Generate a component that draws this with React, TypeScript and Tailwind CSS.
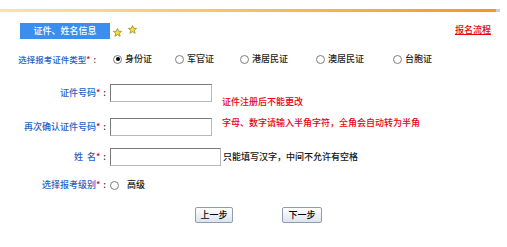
import React from "react";

const Star = () => (
  <svg width="9" height="9" viewBox="0 0 10 10">
    <polygon
      points="5,0.6 6.3,3.6 9.5,3.8 7,5.9 7.9,9.2 5,7.4 2.1,9.2 3,5.9 0.5,3.8 3.7,3.6"
      fill="#f7e03a"
      stroke="#9a8a2a"
      strokeWidth="0.9"
      strokeLinejoin="round"
    />
  </svg>
);

const Radio = ({ checked = false }: { checked?: boolean }) => (
  <span className="flex h-[9px] w-[9px] shrink-0 items-center justify-center rounded-full border border-[#7d7d7d] bg-white">
    {checked && <span className="h-[4px] w-[4px] rounded-full bg-black" />}
  </span>
);

const Label = ({ text, w }: { text: string; w: string }) => (
  <div className={`${w} shrink-0 text-right whitespace-pre`}>
    <span className="text-[#1f5fc8]">{text}</span>
    <span className="text-[#e60012]">*</span>
    <span className="ml-[3px] text-[#333]">:</span>
  </div>
);

export default function App() {
  const opts = [
    { t: "身份证", w: "w-[62px]", c: true },
    { t: "军官证", w: "w-[65px]", c: false },
    { t: "港居民证", w: "w-[76px]", c: false },
    { t: "澳居民证", w: "w-[77px]", c: false },
    { t: "台胞证", w: "w-[50px]", c: false },
  ];
  return (
    <div className="h-[247px] w-[507px] overflow-hidden bg-white font-['Noto_Sans_CJK_SC','Noto_Sans',sans-serif] text-[9px] font-medium leading-[10px]">
      <div className="pt-[9px]">
        <div className="flex w-[500px]">
          <div className="h-[3px] w-[496px] bg-gradient-to-r from-[#fbe2a6] via-[#f8c05a] to-[#f2981c]" />
          <div className="h-[3px] w-[4px] bg-[#cfcfcf]" />
        </div>
      </div>

      <div className="mt-[8px] flex h-[20px] w-[500px]">
        <div className="ml-[20px] mt-[3px] flex h-[16px] w-[90px] items-center justify-center bg-[#3a8ef0] text-white">
          证件、姓名信息
        </div>
        <div className="flex flex-1 items-start bg-[radial-gradient(#d4d4d4_0.55px,transparent_0.7px)] bg-[length:2px_2px]">
          <div className="ml-[3px] mt-[8px]">
            <Star />
          </div>
          <div className="ml-[6px] mt-[5px]">
            <Star />
          </div>
          <a className="ml-auto mr-[9px] mt-[5px] text-[#e60012] underline">报名流程</a>
        </div>
      </div>

      {/* Row 1 */}
      <div className="mt-[10px] flex h-[18px] items-center">
        <div className="text-[8.5px]">
          <Label text="选择报考证件类型" w="w-[96px]" />
        </div>
        <div className="ml-[17px] flex items-center">
          {opts.map((o) => (
            <div key={o.t} className={`${o.w} flex items-center gap-[3px] text-[#222]`}>
              <Radio checked={o.c} />
              <span>{o.t}</span>
            </div>
          ))}
        </div>
      </div>

      {/* Row 2 */}
      <div className="mt-[16px] flex h-[18px] items-start">
        <div className="flex h-[18px] items-center">
          <Label text="证件号码" w="w-[106px]" />
        </div>
        <div className="ml-[4px] h-[18px] w-[102px] border border-[#7a7a7a] border-b-[#b8b8b8] border-r-[#b8b8b8] bg-white" />
        <div className="ml-[10px] mt-[13px] text-[#e60012]">证件注册后不能更改</div>
      </div>

      {/* Row 3 */}
      <div className="mt-[16px] flex h-[18px] items-start">
        <div className="flex h-[18px] items-center">
          <Label text="再次确认证件号码" w="w-[106px]" />
        </div>
        <div className="ml-[4px] h-[18px] w-[102px] border border-[#7a7a7a] border-b-[#b8b8b8] border-r-[#b8b8b8] bg-white" />
        <div className="ml-[10px] mt-0 text-[#e60012]">字母、数字请输入半角字符，全角会自动转为半角</div>
      </div>

      {/* Row 4 */}
      <div className="mt-[12px] flex h-[18px] items-center">
        <Label text="姓  名" w="w-[106px]" />
        <div className="ml-[4px] h-[18px] w-[111px] border border-[#7a7a7a] border-b-[#b8b8b8] border-r-[#b8b8b8] bg-white" />
        <div className="ml-[2px] text-[#111]">只能填写汉字，中间不允许有空格</div>
      </div>

      {/* Row 5 */}
      <div className="mt-[10px] flex h-[18px] items-center">
        <Label text="选择报考级别" w="w-[106px]" />
        <div className="ml-[4px] flex items-center gap-[8px] text-[#111]">
          <Radio />
          <span>高级</span>
        </div>
      </div>

      {/* Buttons */}
      <div className="mt-[13px] flex">
        <button className="ml-[195px] flex h-[16px] w-[38px] items-center justify-center rounded-[2px] border border-[#8e9cb3] bg-gradient-to-b from-white to-[#dde4ee] text-[9px] leading-[10px] text-black">
          上一步
        </button>
        <button className="ml-[49px] flex h-[16px] w-[40px] items-center justify-center rounded-[2px] border border-[#8e9cb3] bg-gradient-to-b from-white to-[#dde4ee] text-[9px] leading-[10px] text-black">
          下一步
        </button>
      </div>
    </div>
  );
}
